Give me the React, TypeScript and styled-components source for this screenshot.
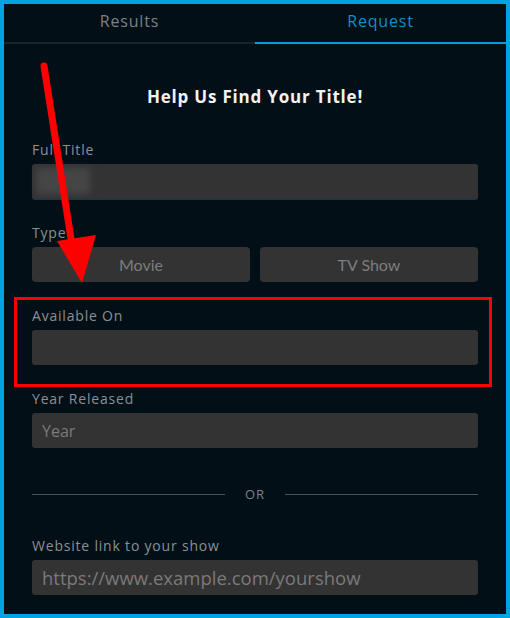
import { createGlobalStyle, styled } from "styled-components"

const GlobalStyle = createGlobalStyle`
  html, body {
    margin: 0;
    padding: 0;
    background: #020f17;
  }
  * {
    box-sizing: border-box;
  }
`

const Frame = styled.div`
  position: relative;
  width: 510px;
  height: 618px;
  border: 4px solid #02a3e3;
  background: #020f17;
  font-family: "Open Sans", Lato, sans-serif;
  overflow: hidden;
`

const TabBar = styled.div`
  display: flex;
  height: 40px;
`

const Tab = styled.div<{ $active?: boolean }>`
  flex: 1;
  display: flex;
  align-items: center;
  justify-content: center;
  padding-bottom: 4px;
  font-size: 16px;
  letter-spacing: 0.8px;
  color: ${p => (p.$active ? "#0b8fca" : "#7b8186")};
  border-bottom: 2px solid ${p => (p.$active ? "#0a9ad8" : "#1c2328")};
`

const Form = styled.div`
  display: flex;
  flex-flow: column nowrap;
  padding: 0 28px;
`

const Heading = styled.h2`
  margin: 42px 0 33px;
  text-align: center;
  font-size: 17px;
  line-height: 22px;
  letter-spacing: 0.8px;
  font-weight: 700;
  color: #f2f2f2;
`

const Field = styled.div`
  display: flex;
  flex-flow: column nowrap;
  gap: 5px;
  margin-bottom: 25px;
`

const Label = styled.div`
  font-size: 14px;
  line-height: 18px;
  letter-spacing: 0.8px;
  color: #8a9096;
`

const Input = styled.div<{ $focused?: boolean; $large?: boolean }>`
  position: relative;
  height: 35px;
  background: #333333;
  border-radius: 3px;
  padding: 0 10px;
  display: flex;
  align-items: center;
  font-size: ${p => (p.$large ? "18.5px" : "16px")};
  color: #7a7a7a;
  box-shadow: ${p => (p.$focused ? "0 1px 0 #16384a" : "none")};
`

const Redacted = styled.div`
  position: absolute;
  left: 4px;
  top: 4px;
  width: 54px;
  height: 26px;
  background: #454545;
  filter: blur(3px);
`

const ButtonRow = styled.div`
  display: grid;
  grid-template-columns: 1fr 1fr;
  gap: 10px;
`

const Choice = styled.div`
  height: 35px;
  background: #333333;
  border-radius: 4px;
  display: flex;
  align-items: center;
  justify-content: center;
  font-family: Lato, sans-serif;
  font-size: 16px;
  color: #7d7d7d;
`

const Divider = styled.div`
  display: flex;
  align-items: center;
  gap: 20px;
  margin: 12px 0 34px;
  font-size: 13px;
  letter-spacing: 1px;
  color: #7d8489;

  &::before, &::after {
    content: "";
    flex: 1;
    height: 1px;
    background: #4b5156;
  }
`

const Highlight = styled.div`
  position: absolute;
  left: 10px;
  top: 293px;
  width: 478px;
  height: 90px;
  border: 3.5px solid #ff0000;
`

const Arrow = styled.svg`
  position: absolute;
  left: -4px;
  top: -4px;
  pointer-events: none;
`

export default function App() {
  return (
    <>
      <GlobalStyle />
      <Frame>
        <TabBar>
          <Tab>Results</Tab>
          <Tab $active>Request</Tab>
        </TabBar>
        <Form>
          <Heading>Help Us Find Your Title!</Heading>
          <Field>
            <Label>Full Title</Label>
            <Input $focused>
              <Redacted />
            </Input>
          </Field>
          <Field>
            <Label>Type</Label>
            <ButtonRow>
              <Choice>Movie</Choice>
              <Choice>TV Show</Choice>
            </ButtonRow>
          </Field>
          <Field>
            <Label>Available On</Label>
            <Input />
          </Field>
          <Field>
            <Label>Year Released</Label>
            <Input>Year</Input>
          </Field>
          <Divider>OR</Divider>
          <Field>
            <Label>Website link to your show</Label>
            <Input $large>https://www.example.com/yourshow</Input>
          </Field>
        </Form>
        <Highlight />
        <Arrow width="510" height="618" viewBox="0 0 510 618">
          <line x1="44" y1="66" x2="72" y2="245" stroke="#ff0000" strokeWidth="7" strokeLinecap="round" />
          <polygon points="57,241 96,235 82,283" fill="#ff0000" />
        </Arrow>
      </Frame>
    </>
  )
}
